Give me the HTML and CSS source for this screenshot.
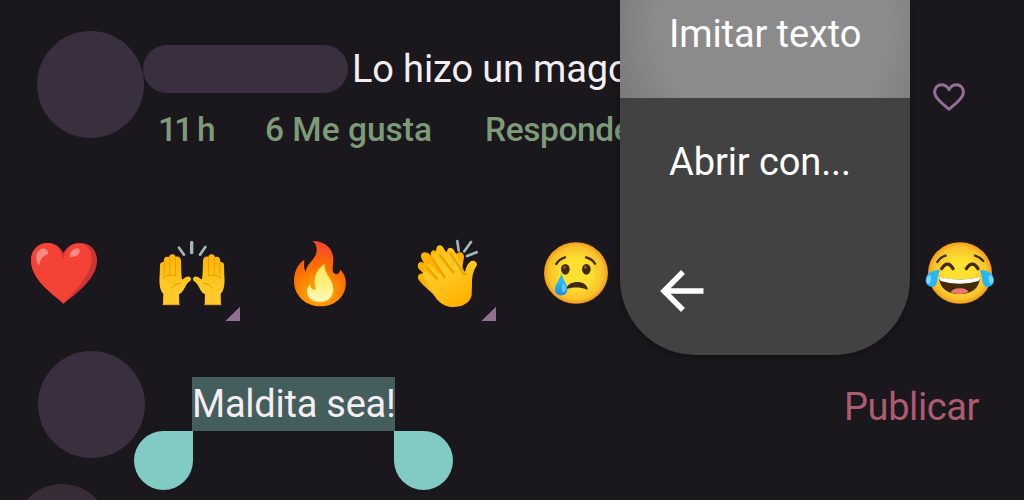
FILE: index.html
```
<!DOCTYPE html>
<html lang="es">
<head>
<meta charset="utf-8">
<title>Comentarios</title>
<link rel="stylesheet" href="styles.css">
</head>
<body>
<main class="screen">
  <section class="comment">
    <div class="avatar"></div>
    <div class="comment-body">
      <div class="comment-line"><span class="username"></span><span class="comment-text">Lo hizo un mago</span></div>
      <div class="comment-meta"><span class="age">11 h</span><span class="likes">6 Me gusta</span><span class="reply">Responder</span></div>
    </div>
    <svg class="like" viewBox="0 0 34 30"><path d="M17 27.2 C13.5 24 2.6 17 2.6 10.2 C2.6 5.7 5.8 2.8 9.4 2.8 C12.8 2.8 15.5 4.7 17 7.6 C18.5 4.7 21.2 2.8 24.6 2.8 C28.2 2.8 31.4 5.7 31.4 10.2 C31.4 17 20.5 24 17 27.2Z"/></svg>
  </section>

  <section class="reactions">
    <svg viewBox="0 0 384 330">
      <path fill="#cc3435" d="M191 251C160 222 95 182 93 123C92 91 114 69 143 69C164 69 181 80 190 99C201 80 219 69 241 69C271 69 292 91 291 124C289 179 225 224 191 251Z"/>
      <path fill="#f44336" d="M190 251C160 222 95 182 93 123C92 91 114 69 143 69C166 69 181 85 189 117C196 89 211 70 234 70C261 70 276 91 275 119C273 171 215 220 190 251Z"/>
      <path fill="#ff8a80" d="M116 136C104 120 107 96 121 88C132 82 145 88 144 98C143 107 130 106 124 116C119 124 121 132 116 136ZM209 110C208 97 220 85 232 85C242 86 241 98 234 104C227 110 216 113 209 110Z"/>
    </svg>

    <svg viewBox="384 0 384 330">
      <defs>
        <linearGradient id="palm" x1="0" y1="0" x2="0" y2="1"><stop offset="0" stop-color="#ffb300"/><stop offset=".65" stop-color="#ffca28"/></linearGradient>
        <g id="raised-hand">
          <path fill="url(#palm)" d="M489 255L490 222C479 210 477 190 479 166L480 137C480 129 484 125 491 126C491 115 495 109 502 110C506 112 508 110 509 107C513 100 526 101 527 111C534 107 542 113 543 121L544 158C546 174 544 182 551 176C560 168 571 167 573 177C574 184 565 185 560 193C552 207 548 218 537 223L538 255Z"/>
          <path class="crease" d="M493 128V164M509 109V161M526 114V162M489 173Q505 161 528 167M515 205Q520 191 542 190"/>
          <path class="crease" d="M489 254H538"/>
        </g>
      </defs>
      <use href="#raised-hand"/>
      <use href="#raised-hand" transform="matrix(-1 0 0 1 1152 0)"/>
      <path class="spark wide" d="M575 67V98"/><path class="spark" d="M537 83L552 104M616 81L600 104"/>
      <path class="more" d="M720 260V303H676Z"/>
    </svg>

    <svg viewBox="-42 0 384 330">
      <defs>
        <radialGradient id="flame" gradientUnits="userSpaceOnUse" cx="148" cy="220" r="155"><stop offset=".25" stop-color="#ff9800"/><stop offset=".55" stop-color="#ff6d00"/><stop offset="1" stop-color="#f44336"/></radialGradient>
        <linearGradient id="core" x1="0" y1="0" x2="0" y2="1"><stop offset="0" stop-color="#ffe65c"/><stop offset=".55" stop-color="#fff07f"/><stop offset="1" stop-color="#fff9c4"/></linearGradient>
      </defs>
      <path fill="url(#flame)" d="M128 63C165 62 190 87 190 118C190 137 184 152 192 160C203 167 210 158 210 149C225 161 229 179 227 197C223 235 190 259 152 259C108 259 73 228 72 185C71 157 83 132 103 119C101 137 103 149 107 156C111 128 134 121 139 99C142 84 138 71 128 63Z"/>
      <path fill="url(#core)" d="M164 132C162 164 190 177 190 207C190 231 174 246 151 247C126 248 111 233 111 214C111 203 116 195 121 194C121 205 129 211 137 208C127 175 141 145 164 132Z"/>
      <path fill="#ffad18" opacity=".5" d="M114 228C123 247 177 252 188 225C180 255 126 258 114 228Z"/>
    </svg>

    <svg viewBox="342 0 384 330">
      <defs><linearGradient id="clap" x1="0" y1="0" x2=".5" y2="1"><stop offset="0" stop-color="#ffc107"/><stop offset=".5" stop-color="#ffca28"/><stop offset="1" stop-color="#ffb300"/></linearGradient></defs>
      <path fill="#ffb300" d="M497 93C490 87 478 96 483 107L475 100C461 91 447 102 455 116L462 130C450 120 438 132 446 146L465 164C452 154 437 167 447 181C462 202 489 216 501 239L550 225L574 160L582 112C582 98 571 92 560 101L551 96Z"/>
      <path fill="url(#clap)" d="M500 96C494 80 508 70 518 80L536 109L532 99C528 82 545 78 552 91L574 134C580 146 583 160 586 153C590 137 594 129 604 123C616 120 625 130 619 139C610 153 606 168 606 190L605 226C601 248 578 261 550 261C528 261 511 251 500 236C489 219 477 202 469 187L459 169C454 157 464 151 473 157L494 177L470 145C466 132 478 129 486 138L514 167L486 116C482 102 494 94 503 105Z"/>
      <path class="clap-crease" d="M471 143L500 176M486 115L523 172M510 106L550 157M541 100L574 149Q579 163 586 163"/>
      <path class="spark" d="M562 63L566 92M603 66L583 94M620 97L591 108"/>
      <path class="more" d="M678 260V303H634Z"/>
    </svg>

    <svg viewBox="-54 0 384 330">
      <defs>
        <radialGradient id="face"><stop offset=".45" stop-color="#fde030"/><stop offset=".85" stop-color="#f9c22c"/><stop offset="1" stop-color="#f39a18"/></radialGradient>
        <linearGradient id="tear" x1="0" y1="0" x2="0" y2="1"><stop offset=".4" stop-color="#29b6f6"/><stop offset="1" stop-color="#1e88e5"/></linearGradient>
      </defs>
      <ellipse cx="138" cy="159" rx="96" ry="92.500" fill="url(#face)"/>
      <g fill="#422b0d"><ellipse cx="106" cy="148" rx="13" ry="16"/><ellipse cx="169" cy="148" rx="13" ry="16"/><path d="M108 208C112 180 170 178 173 207C173 210 170 209 168 208C151 201 127 201 108 208Z"/></g>
      <g fill="#896024"><ellipse cx="103" cy="142" rx="4" ry="4.500"/><ellipse cx="166" cy="142" rx="4" ry="4.500"/></g>
      <path class="brow" d="M79 132Q87 117 105 112M168 112Q187 117 195 131"/>
      <path fill="url(#tear)" d="M94 161C99 179 112 193 112 207C112 219 105 226 94 226C82 226 75 219 75 207C75 193 90 178 94 161Z"/>
      <path fill="#81d4fa" opacity=".75" d="M99 192C110 194 110 214 101 217C94 219 95 194 99 192Z"/>
    </svg>

    <span></span><span></span>

    <svg viewBox="-12 0 384 330">
      <ellipse cx="180" cy="159" rx="96" ry="92.500" fill="url(#face)"/>
      <path class="brow" d="M112 126Q121 111 137 107M225 107Q239 111 250 123"/>
      <path class="smile-eye" d="M125 146Q143 119 159 146M199 146Q217 119 234 146"/>
      <path fill="#422b0d" d="M117 170Q180 187 240 170C239 204 216 222 179 222C141 222 117 203 117 170Z"/>
      <path fill="#fff" d="M117 170Q180 187 240 170Q242 178 235 183Q180 200 122 183Q117 178 117 170Z"/>
      <path fill="#ef7770" d="M151 217Q161 204 180 205Q198 204 206 216Q180 227 151 217Z"/>
      <g id="joy-tear"><path fill="#29b6f6" d="M119 150C94 150 78 160 77 181C77 195 89 203 101 200C115 195 110 174 119 150Z"/><path fill="#81d4fa" d="M91 165C80 166 75 186 84 191C93 195 95 168 91 165Z"/></g>
      <use href="#joy-tear" transform="matrix(-1 0 0 1 359 0)"/>
    </svg>
  </section>

  <section class="composer">
    <div class="avatar"></div>
    <div class="selection"><span class="draft">Maldita sea!</span><i class="handle start"></i><i class="handle end"></i></div>
    <span class="publish">Publicar</span>
  </section>
  <div class="next-avatar"></div>

  <aside class="menu">
    <div class="menu-item active"><span class="imitate">Imitar texto</span></div>
    <div class="menu-item"><span class="open-with">Abrir con...</span></div>
    <svg class="back" viewBox="0 0 44 42"><path d="M43.500 21H5M23 2L4 21L23 40"/></svg>
  </aside>
</main>
</body>
</html>
```
FILE: styles.css
```
* { box-sizing: border-box; }
body { margin: 0; background: #1a171d; }
.screen {
  position: relative;
  width: 1024px;
  height: 500px;
  overflow: hidden;
  background: #1a171d;
  font-family: Roboto, "Liberation Sans", sans-serif;
  font-size: 38px;
  line-height: 48px;
  white-space: nowrap;
}
.comment { display: flex; height: 220px; padding: 31px 58px 0 37px; }
.avatar { flex: none; width: 107px; height: 107px; border-radius: 50%; background: #392f3e; }
.comment-body { width: 480px; padding-top: 14px; margin-left: -1px; }
.comment-line { display: flex; gap: 4px; }
.username { flex: none; width: 205px; height: 47.500px; border-radius: 24px; background: #392f3e; }
.comment-text { color: #f3eef2; letter-spacing: -.15px; }
.comment-meta {
  display: flex;
  padding: 13px 0 0 15px;
  color: #7d9b78;
  font-size: 33.500px;
  font-weight: 500;
  line-height: 48px;
}
.comment-meta span { flex: none; }
.age { width: 107px; letter-spacing: -2.800px; word-spacing: 1px; }
.likes { width: 220px; }
.reply { letter-spacing: -.4px; }
.like { width: 34px; height: 30px; margin: 51px 0 0 auto; fill: none; stroke: #936f96; stroke-width: 3; stroke-linejoin: round; }

.reactions { display: grid; grid-template-columns: repeat(8, 128px); height: 110px; }
.reactions svg { display: block; width: 128px; height: 110px; }
.crease { fill: none; stroke: #e99b05; stroke-width: 3; stroke-linecap: round; }
.clap-crease { fill: none; stroke: #eda600; stroke-width: 8; stroke-linecap: round; stroke-linejoin: round; }
.spark { fill: none; stroke: #a4b5bd; stroke-width: 8; stroke-linecap: round; }
.wide { stroke-width: 10; }
.more { fill: #8f7192; }
.brow { fill: none; stroke: #422b0d; stroke-width: 7; stroke-linecap: round; }
.smile-eye { fill: none; stroke: #422b0d; stroke-width: 10; stroke-linecap: round; }

.composer { display: flex; height: 154px; padding: 21px 45px 0 38px; }
.selection { position: relative; width: 203px; height: 54px; margin: 26px 0 0 47px; background: #445d5d; line-height: 54px; color: #f3eef2; letter-spacing: -.25px; }
.handle { position: absolute; top: 54px; width: 59px; height: 59px; background: #81cbc4; }
.start { right: 202.500px; border-radius: 50% 0 50% 50%; }
.end { left: 202px; border-radius: 0 50% 50% 50%; }
.publish { margin: 32px 0 0 auto; color: #ac5b70; letter-spacing: -.4px; }
.next-avatar { width: 94px; height: 94px; margin-left: 15px; border-radius: 50%; background: #382c37; }

.menu {
  position: absolute;
  top: 0;
  left: 620px;
  width: 290px;
  height: 355px;
  overflow: hidden;
  border-radius: 0 0 76px 76px;
  background: #424242;
  box-shadow: 0 2px 9px #0004;
  color: #fff;
  letter-spacing: -.1px;
}
.menu-item { height: 128px; padding: 40px 0 0 49px; }
.menu-item.active { height: 98px; padding-top: 10px; background: radial-gradient(ellipse 178px 190px at 53% 25%, #8b8b8b 65%, #777 100%); }
.back { display: block; width: 44px; height: 42px; margin: 44px 0 0 40px; fill: none; stroke: #fff; stroke-width: 5.500; }
```
